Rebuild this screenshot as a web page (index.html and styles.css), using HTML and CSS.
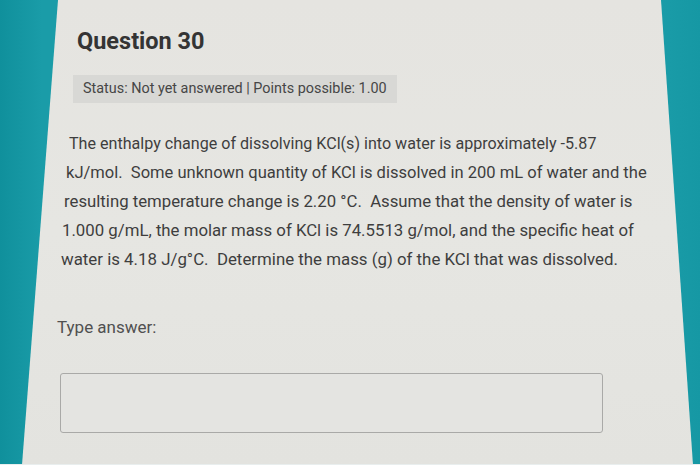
FILE: index.html
```html
<!DOCTYPE html>
<html>
<head>
<meta charset="utf-8">
<link rel="stylesheet" href="styles.css">
</head>
<body>
<div class="sheet">
  <h1 class="title">Question 30</h1>
  <div class="status">Status: Not yet answered | Points possible: 1.00</div>
  <p class="question"><span class="line l1">The enthalpy change of dissolving KCl(s) into water is approximately -5.87</span><span class="line l2">kJ/mol.&nbsp; Some unknown quantity of KCl is dissolved in 200 mL of water and the</span><span class="line l3">resulting temperature change is 2.20 °C.&nbsp; Assume that the density of water is</span><span class="line l4">1.000 g/mL, the molar mass of KCl is 74.5513 g/mol, and the specific heat of</span><span class="line l5">water is 4.18 J/g°C.&nbsp; Determine the mass (g) of the KCl that was dissolved.</span></p>
  <div class="label">Type answer:</div>
  <div class="answer"></div>
</div>
</body>
</html>
```
FILE: styles.css
```css
html, body {
  margin: 0;
  padding: 0;
}
body {
  width: 700px;
  height: 465px;
  overflow: hidden;
  background:
    linear-gradient(0deg, #e9eeee 0, #e9eeee 1px, transparent 1px),
    linear-gradient(90deg, #10909c 0%, #1a9ca8 6%, #1a9ca8 94%, #1698a4 100%);
  font-family: Roboto, "Liberation Sans", sans-serif;
  color: #3c3c3c;
}
.sheet {
  height: 464px;
  box-sizing: border-box;
  padding-top: 27px;
  background: linear-gradient(180deg, #e5e4e0 0%, #e6e6e2 50%, #e3e3df 100%);
  clip-path: polygon(58px 0, 661px 0, 693px 465px, 22px 465px);
  display: flex;
  flex-direction: column;
  align-items: flex-start;
}
.title {
  margin: 0 0 0 77px;
  font-size: 23.5px;
  line-height: 28px;
  font-weight: 700;
  color: #343434;
}
.status {
  margin: 20px 0 0 73px;
  height: 28px;
  line-height: 28px;
  padding: 0 10px;
  font-size: 14.4px;
  background: #d8d8d5;
  color: #464646;
}
.question {
  margin: 27px 0 0 0;
  font-size: 16px;
  line-height: 28.7px;
  color: #3e3e3e;
}
.line {
  display: block;
  white-space: nowrap;
}
.l1 { margin-left: 69px; font-size: 16.1px; }
.l2 { margin-left: 66px; font-size: 16.55px; }
.l3 { margin-left: 64px; font-size: 16.75px; }
.l4 { margin-left: 62px; font-size: 16.8px; }
.l5 { margin-left: 61px; font-size: 16.85px; }
.label {
  margin: 41px 0 0 57px;
  font-size: 17px;
  line-height: 24px;
  color: #505050;
}
.answer {
  margin: 34px 0 0 60px;
  width: 541px;
  height: 58px;
  border: 1px solid #a9a9a7;
  border-radius: 3px;
  background: #e4e4e1;
}
```
